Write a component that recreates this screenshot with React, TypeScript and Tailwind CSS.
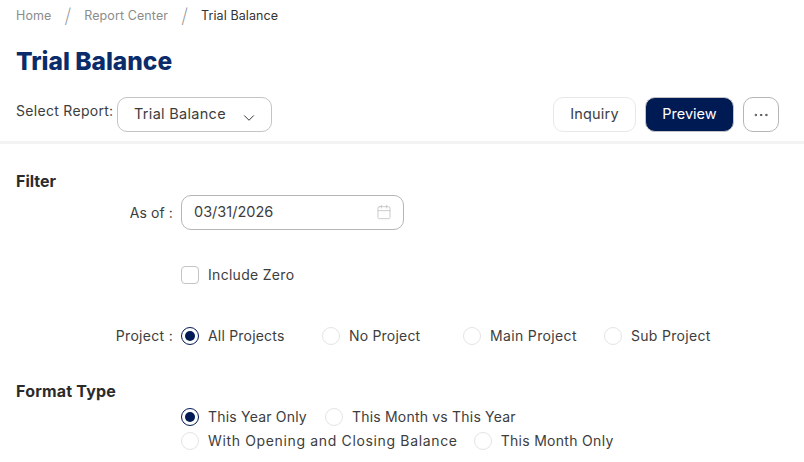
import { ChevronDown, Calendar, Ellipsis } from 'lucide-react';

function Radio({ label, checked, className, textClass }: { label: string; checked?: boolean; className?: string; textClass?: string }) {
  return (
    <label className={`flex items-center gap-[9px] ${className ?? ''}`}>
      <span
        className={`flex h-[18px] w-[18px] shrink-0 items-center justify-center rounded-full border bg-white ${
          checked ? 'border-[#001a54]' : 'border-[#e4e4e4]'
        }`}
      >
        {checked && <span className="h-[10px] w-[10px] rounded-full bg-[#001a54]" />}
      </span>
      <span className={`whitespace-nowrap text-[14px] leading-5 text-[#3d3d3d] ${textClass ?? 'tracking-[0.2px]'}`}>{label}</span>
    </label>
  );
}

export default function App() {
  return (
    <div className="h-[462px] w-[804px] overflow-hidden bg-white font-['Inter',sans-serif] text-[#3d3d3d]">
      <nav className="flex h-[30px] items-center pt-[2px] pl-4 text-[12.5px] tracking-[0.1px]">
        <span className="text-[#8c8c8c]">Home</span>
        <span className="ml-[13px] text-[20px] leading-none font-extralight text-[#8c8c8c]">/</span>
        <span className="ml-[13px] text-[#8c8c8c]">Report Center</span>
        <span className="ml-[13px] text-[20px] leading-none font-extralight text-[#8c8c8c]">/</span>
        <span className="ml-[13px] text-[#333333]">Trial Balance</span>
      </nav>

      <h1 className="mt-[15px] pl-4 text-[24.5px] leading-8 font-extrabold text-[#0a2c6b]">Trial Balance</h1>

      <div className="mt-[20px] flex h-[35px] items-center pr-[25px] pl-4">
        <span className="mb-[9px] w-[101px] text-[14px] tracking-[0.3px] whitespace-nowrap">Select Report:</span>
        <button className="flex h-[35px] w-[155px] items-center justify-between rounded-[10px] border border-[#c4c4c4] pr-[13px] pb-[1px] pl-4 text-[14.5px] tracking-[0.3px]">
          Trial Balance
          <ChevronDown className="mt-[7px] h-[18px] w-[18px] text-[#333333]" strokeWidth={1.3} />
        </button>
        <div className="ml-auto flex gap-[9px]">
          <button className="h-[35px] w-[83px] rounded-[10px] border border-[#e8e8e8] pb-[1px] text-[14.5px] tracking-[0.2px]">Inquiry</button>
          <button className="h-[35px] w-[89px] rounded-[10px] border border-[#c4c4c4] bg-[#001a54] pb-[1px] text-[14.5px] text-white">
            Preview
          </button>
          <button className="flex h-[35px] w-[36px] items-center justify-center rounded-[10px] border border-[#b5b5b5]">
            <Ellipsis className="h-[18px] w-[18px]" strokeWidth={1.2} />
          </button>
        </div>
      </div>

      <div className="mt-[9px] h-[3px] bg-[#f3f3f3]" />

      <section className="px-4">
        <h2 className="mt-[27px] text-[16px] leading-5 font-bold text-[#2b2b2b]">Filter</h2>

        <div className="mt-[4px] flex items-center">
          <span className="w-[165px] pr-2 pb-[1px] text-right text-[14px] tracking-[0.1px]">As of :</span>
          <div className="flex h-[35px] w-[223px] items-center justify-between rounded-[10px] border border-[#b5b5b5] pr-[11px] pb-[1px] pl-3 text-[14.5px]">
            03/31/2026
            <Calendar className="h-4 w-4 text-[#c4c4c4]" strokeWidth={1.3} />
          </div>
        </div>

        <label className="mt-[35px] ml-[165px] flex items-center gap-[9px]">
          <span className="h-[18px] w-[18px] rounded-[4px] border border-[#c4c4c4]" />
          <span className="text-[14px] leading-5 tracking-[0.3px]">Include Zero</span>
        </label>

        <div className="mt-[40px] flex items-center">
          <span className="w-[165px] pr-2 text-right text-[14px] tracking-[0.3px]">Project :</span>
          <Radio label="All Projects" checked className="w-[141px]" />
          <Radio label="No Project" className="w-[141px]" />
          <Radio label="Main Project" className="w-[141px]" textClass="tracking-[0.35px]" />
          <Radio label="Sub Project" textClass="tracking-[0.3px]" />
        </div>

        <h2 className="mt-[35px] text-[16px] leading-5 font-bold tracking-[0.2px] text-[#2b2b2b]">Format Type</h2>

        <div className="mt-[6px] ml-[165px] flex items-center gap-[18px]">
          <Radio label="This Year Only" checked />
          <Radio label="This Month vs This Year" />
        </div>
        <div className="mt-[4px] ml-[165px] flex items-center gap-[16px]">
          <Radio label="With Opening and Closing Balance" textClass="tracking-[0.65px]" />
          <Radio label="This Month Only" textClass="tracking-[0.3px]" />
        </div>
      </section>
    </div>
  );
}
